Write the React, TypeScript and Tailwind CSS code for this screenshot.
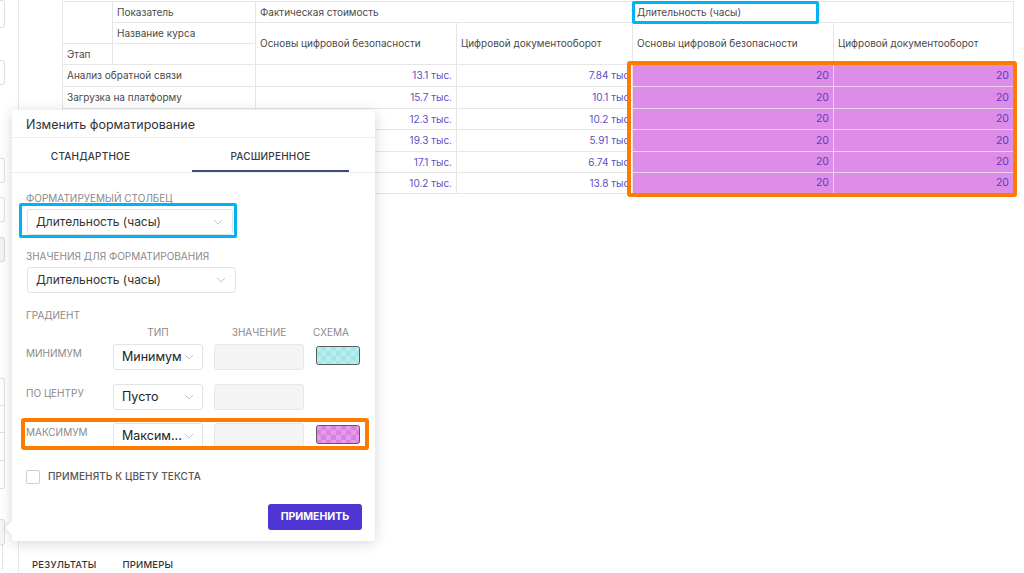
import React from "react";

const Chevron = () => (
  <svg width="10" height="6" viewBox="0 0 10 6" className="shrink-0">
    <polyline points="1,1 5,5 9,1" fill="none" stroke="#c4c4c4" strokeWidth="1" />
  </svg>
);

const Swatch = ({ base, alt, id }: { base: string; alt: string; id: string }) => (
  <svg width="44" height="19" viewBox="0 0 44 19" className="block">
    <defs>
      <pattern id={id} width="10" height="10" patternUnits="userSpaceOnUse">
        <rect width="10" height="10" fill={base} />
        <rect width="5" height="5" fill={alt} />
        <rect x="5" y="5" width="5" height="5" fill={alt} />
      </pattern>
    </defs>
    <rect x="0.5" y="0.5" width="43" height="18" rx="2" fill={`url(#${id})`} stroke="#5b5b5b" strokeWidth="1" />
  </svg>
);

const rows = [
  { label: "Анализ обратной связи", a: "13.1 тыс.", b: "7.84 тыс.", h: "h-[22px]" },
  { label: "Загрузка на платформу", a: "15.7 тыс.", b: "10.1 тыс.", h: "h-[22px]" },
  { label: "Публикация", a: "12.3 тыс.", b: "10.2 тыс.", h: "h-[21px]" },
  { label: "Разработка", a: "19.3 тыс.", b: "5.91 тыс.", h: "h-[22px]" },
  { label: "Тестирование", a: "17.1 тыс.", b: "6.74 тыс.", h: "h-[21px]" },
  { label: "Проектирование", a: "10.2 тыс.", b: "13.8 тыс.", h: "h-[21px]" },
];

const cell = "border border-[#e6e6e6] px-[4px] text-[10px] text-[#4a4a4a] font-normal align-middle whitespace-nowrap overflow-hidden";

export default function App() {
  return (
    <div
      className="relative flex w-[1024px] h-[573px] overflow-hidden bg-white"
      style={{ fontFamily: "Inter, 'Noto Sans', sans-serif" }}
    >
      {/* Sidebar */}
      <div className="w-[19px] shrink-0 border-r border-[#e8e8e8] flex flex-col">
        <div className="w-[5px] h-[28px] border border-l-0 border-[#e0e0e0] rounded-r-[3px]" />
        <div className="w-[5px] h-[25px] mt-[32px] border border-l-0 border-[#e0e0e0] rounded-r-[3px]" />
        <div className="w-[5px] h-[25px] mt-[73px] border border-l-0 border-[#e0e0e0] rounded-r-[3px]" />
        <div className="w-[5px] h-[25px] mt-[14px] border border-l-0 border-[#e0e0e0] rounded-r-[3px]" />
        <div className="w-[5px] h-[25px] mt-[15px] border border-l-0 border-[#d8d8d8] bg-[#f3f3f3] rounded-r-[3px]" />
        <div className="w-[5px] mt-[116px] border border-l-0 border-[#e0e0e0] rounded-r-[3px] flex flex-col">
          <div className="h-[27px] border-b border-[#e0e0e0]" />
          <div className="h-[27px] border-b border-[#e0e0e0]" />
          <div className="h-[28px] border-b border-[#e0e0e0]" />
          <div className="h-[27px]" />
        </div>
        <div className="w-[5px] h-[26px] mt-[30px] border border-l-0 border-[#e0e0e0] bg-[#f7f7f7] rounded-r-[3px]" />
        <div className="ml-[2px] w-0 h-[24px] border-l border-dotted border-[#c8c8c8]" />
      </div>

      {/* Main */}
      <div className="flex-1 flex flex-col">
        <div className="flex-1 pl-[43px] pt-[1px]">
          <table className="table-fixed border-collapse" style={{ width: 951 }}>
            <colgroup>
              <col style={{ width: 50 }} />
              <col style={{ width: 143 }} />
              <col style={{ width: 201 }} />
              <col style={{ width: 176 }} />
              <col style={{ width: 201 }} />
              <col style={{ width: 180 }} />
            </colgroup>
            <tbody>
              <tr className="h-[21px]">
                <td className={cell} rowSpan={2}></td>
                <td className={cell}>Показатель</td>
                <td className={cell} colSpan={2}>Фактическая стоимость</td>
                <td className={cell} colSpan={2}>Длительность (часы)</td>
              </tr>
              <tr className="h-[21px]">
                <td className={cell}>Название курса</td>
                <td className={cell} rowSpan={2}>Основы цифровой безопасности</td>
                <td className={cell} rowSpan={2}>Цифровой документооборот</td>
                <td className={cell} rowSpan={2}>Основы цифровой безопасности</td>
                <td className={cell} rowSpan={2}>Цифровой документооборот</td>
              </tr>
              <tr className="h-[21px]">
                <td className={cell}>Этап</td>
                <td className={cell}></td>
              </tr>
              {rows.map((r) => (
                <tr key={r.label} className={r.h}>
                  <td className={cell} colSpan={2}>{r.label}</td>
                  <td className={`${cell} text-right text-[10.5px] !text-[#5a4fc6]`}>{r.a}</td>
                  <td className={`${cell} text-right text-[10.5px] !text-[#5a4fc6] !pr-0`}>{r.b}</td>
                  <td className="border border-[#ead3ee] bg-[#dd8de7] px-[4px] text-right text-[10.5px] text-[#5a3cc0]">20</td>
                  <td className="border border-[#ead3ee] bg-[#dd8de7] px-[4px] text-right text-[10.5px] text-[#5a3cc0]">20</td>
                </tr>
              ))}
            </tbody>
          </table>
        </div>
        <div className="h-[30px] pl-[13px] flex items-end pb-[1px] gap-[26px] text-[9.5px] font-medium text-[#333] tracking-[0.2px]">
          <span>РЕЗУЛЬТАТЫ</span>
          <span>ПРИМЕРЫ</span>
        </div>
      </div>

      {/* Table highlight overlays */}
      <div className="absolute left-[632px] top-[1px] w-[187px] h-[23px] border-[3px] border-[#00b4f3] rounded-[2px]" />
      <div className="absolute left-[627px] top-[61px] w-[390px] h-[136px] border-[4px] border-[#ff7b00] rounded-[3px]" />

      {/* Popover */}
      <div className="absolute left-[12px] top-[110px] w-[363px] h-[431px] bg-white rounded-[3px] shadow-[0_2px_14px_rgba(0,0,0,0.16)] flex flex-col">
        <div className="absolute left-[-5px] top-[413px] w-[10px] h-[10px] rotate-45 bg-white shadow-[-2px_2px_3px_rgba(0,0,0,0.06)]" />
        <div className="relative h-[28px] px-[14px] pt-[4px] flex items-center text-[12.5px] text-[#333] border-b border-[#efefef]">
          Изменить форматирование
        </div>
        <div className="relative h-[35px] flex border-b border-[#ececec] text-[10px] font-medium text-[#3a3a3a] tracking-[0.2px]">
          <div className="w-[157px] pt-[2px] flex items-center justify-center">СТАНДАРТНОЕ</div>
          <div className="ml-[23px] w-[157px] pt-[4px] flex items-center justify-center border-b-2 border-[#3f4b7c]">РАСШИРЕННОЕ</div>
        </div>
        <div className="relative px-[14px] flex flex-col text-[#333]">
          <div className="mt-[19px] h-[12px] leading-[12px] text-[10px] text-[#8a8a8a]">ФОРМАТИРУЕМЫЙ СТОЛБЕЦ</div>
          <div className="mt-[5px] w-[206px] h-[26px] ml-[1px] border border-[#e3e3e3] rounded-[3px] flex items-center justify-between pl-[8px] pr-[9px] text-[12px]">
            <span>Длительность (часы)</span>
            <Chevron />
          </div>
          <div className="mt-[15px] h-[12px] leading-[12px] text-[10px] text-[#8a8a8a]">ЗНАЧЕНИЯ ДЛЯ ФОРМАТИРОВАНИЯ</div>
          <div className="mt-[5px] w-[209px] h-[26px] ml-[1px] border border-[#e3e3e3] rounded-[3px] flex items-center justify-between pl-[8px] pr-[9px] text-[12px]">
            <span>Длительность (часы)</span>
            <Chevron />
          </div>
          <div className="mt-[16px] h-[12px] leading-[12px] text-[10px] text-[#8a8a8a]">ГРАДИЕНТ</div>
          <div className="mt-[5px] h-[12px] leading-[12px] flex text-[10px] text-[#8a8a8a]">
            <div className="w-[87px]" />
            <div className="w-[90px] text-center">ТИП</div>
            <div className="w-[11px]" />
            <div className="w-[90px] text-center">ЗНАЧЕНИЕ</div>
            <div className="w-[5px]" />
            <div className="w-[44px] text-center">СХЕМА</div>
          </div>
          {[
            { label: "МИНИМУМ", val: "Минимум", sw: { base: "#a3e6e6", alt: "#b8eeee", id: "sw1" }, mt: "mt-[6px]" },
            { label: "ПО ЦЕНТРУ", val: "Пусто", sw: null, mt: "mt-[14px]" },
            { label: "МАКСИМУМ", val: "Максим...", sw: { base: "#d982e2", alt: "#e39cea", id: "sw2" }, mt: "mt-[13px]" },
          ].map((r) => (
            <div key={r.label} className={`${r.mt} h-[26px] flex items-start`}>
              <div className="w-[87px] pt-[3px] text-[10px] text-[#8a8a8a] leading-[12px]">{r.label}</div>
              <div className="w-[90px] h-[26px] border border-[#e3e3e3] rounded-[3px] flex items-center justify-between pl-[8px] pr-[8px] text-[12.5px] text-[#222]">
                <span>{r.val}</span>
                <Chevron />
              </div>
              <div className="ml-[11px] w-[90px] h-[26px] bg-[#f4f4f4] border border-[#e8e8e8] rounded-[3px]" />
              {r.sw && (
                <div className="ml-[12px] mt-[2px]">
                  <Swatch base={r.sw.base} alt={r.sw.alt} id={r.sw.id} />
                </div>
              )}
            </div>
          ))}
          <div className="mt-[20px] flex items-center">
            <div className="w-[14px] h-[14px] border border-[#cfcfcf] rounded-[2px]" />
            <span className="ml-[8px] text-[10px] font-medium text-[#555] tracking-[0.1px]">ПРИМЕНЯТЬ К ЦВЕТУ ТЕКСТА</span>
          </div>
          <div className="mt-[20px] flex justify-end">
            <div className="w-[94px] h-[26px] mr-[-1px] bg-[#4f35d1] rounded-[3px] flex items-center justify-center text-white text-[10.5px] font-bold">
              ПРИМЕНИТЬ
            </div>
          </div>
        </div>
        {/* Popover highlight overlays */}
        <div className="absolute left-[7px] top-[93px] w-[218px] h-[35px] border-[3px] border-[#00b4f3] rounded-[2px]" />
        <div className="absolute left-[9px] top-[308px] w-[348px] h-[32px] border-[4px] border-[#ff7b00] rounded-[3px]" />
      </div>
    </div>
  );
}
